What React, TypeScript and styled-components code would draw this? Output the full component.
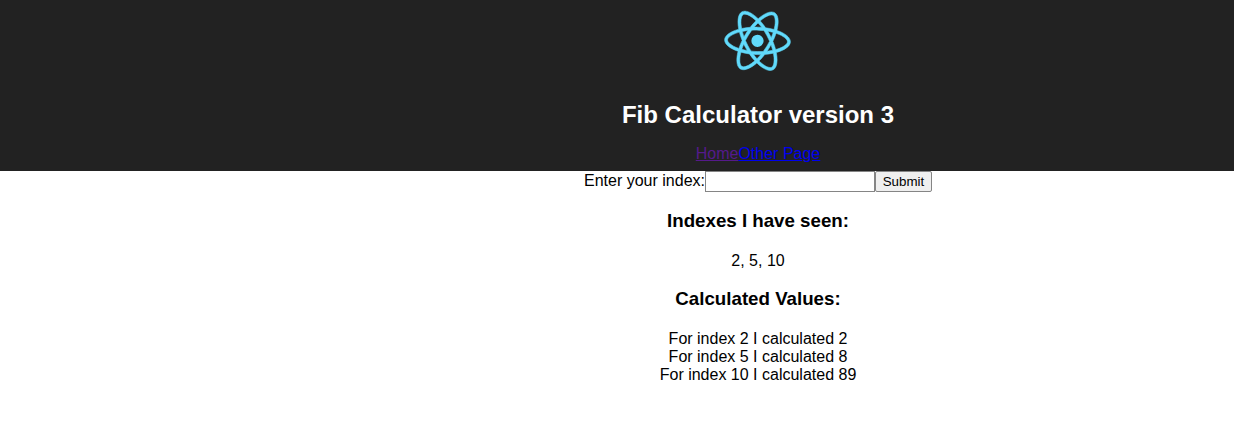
import React, { useState } from 'react';
import styled, { createGlobalStyle } from 'styled-components';

const GlobalStyle = createGlobalStyle`
  body {
    margin: 0;
    background: #fff;
    font-family: "Liberation Sans", Arial, sans-serif;
    font-size: 16px;
    color: #000;
  }
`;

const Page = styled.div`
  text-align: center;
  line-height: 18.4px;
`;

const Header = styled.header`
  box-sizing: border-box;
  height: 171px;
  padding: 1px 0 0 282px;
  background: #222;
  color: #fff;
  display: flex;
  flex-direction: column;
  align-items: center;
`;

const Content = styled.main`
  padding-left: 282px;
`;

const Logo = styled.svg`
  display: block;
  height: 80px;
  width: 113px;
  margin-right: 2px;
  flex: none;
  transform: rotate(1.8deg);
`;

const Title = styled.h1`
  margin: 20px 0 16px;
  font-size: 24px;
  line-height: 28px;
`;

const Nav = styled.nav`
  display: flex;
`;

const NavLink = styled.a<{ $visited?: boolean }>`
  color: ${({ $visited }) => ($visited ? '#551a8b' : '#0000ee')};
  text-decoration: underline;
`;

const Form = styled.form`
  display: flex;
  justify-content: center;
  height: 21px;
`;

const IndexLabel = styled.label`
  padding-top: 1px;
`;

const IndexInput = styled.input`
  box-sizing: border-box;
  width: 170px;
  height: 21px;
  margin: 0;
  padding: 1px 2px;
  border: 1px solid #858585;
  border-radius: 0;
  background: #fff;
  font: 13.333px "Liberation Sans", Arial, sans-serif;
`;

const SubmitButton = styled.button`
  box-sizing: border-box;
  width: 57px;
  height: 21px;
  margin: 0;
  padding: 0;
  border: 1px solid #858585;
  border-radius: 2px;
  background: #efefef;
  color: #000;
  font: 13.333px "Liberation Sans", Arial, sans-serif;
`;

const SectionTitle = styled.h3`
  margin: 18px 0 20.6px;
  font-size: 18.72px;
  line-height: 21px;
`;

const ValueRow = styled.div``;

const seen = [2, 5, 10];
const values = [
  { index: 2, value: 2 },
  { index: 5, value: 8 },
  { index: 10, value: 89 },
];

const ReactLogo = () => (
  <Logo viewBox="0 0 841.9 595.3" fill="#61dafb" aria-label="logo">
    <path stroke="#61dafb" strokeWidth="4" d="M666.3 296.5c0-32.5-40.7-63.3-103.1-82.4 14.4-63.6 8-114.2-20.2-130.4-6.5-3.8-14.1-5.6-22.4-5.6v22.3c4.6 0 8.3.9 11.4 2.6 13.6 7.8 19.5 37.5 14.9 75.7-1.1 9.4-2.9 19.3-5.1 29.4-19.6-4.8-41-8.5-63.5-10.9-13.5-18.5-27.5-35.3-41.6-50 32.6-30.3 63.2-46.9 84-46.9V78c-27.5 0-63.5 19.6-99.9 53.6-36.4-33.8-72.4-53.2-99.9-53.2v22.3c20.7 0 51.4 16.5 84 46.6-14 14.7-28 31.4-41.3 49.9-22.6 2.4-44 6.1-63.6 11-2.3-10-4-19.7-5.2-29-4.7-38.2 1.1-67.9 14.6-75.8 3-1.8 6.9-2.6 11.5-2.6V78.5c-8.4 0-16 1.8-22.6 5.6-28.1 16.2-34.4 66.7-19.9 130.1-62.2 19.2-102.7 49.9-102.7 82.3 0 32.5 40.7 63.3 103.1 82.4-14.4 63.6-8 114.2 20.2 130.4 6.5 3.8 14.1 5.6 22.5 5.6 27.5 0 63.5-19.6 99.9-53.6 36.4 33.8 72.4 53.2 99.9 53.2 8.4 0 16-1.8 22.6-5.6 28.1-16.2 34.4-66.7 19.9-130.1 62-19.1 102.5-49.9 102.5-82.3zm-130.2-66.7c-3.7 12.9-8.3 26.2-13.5 39.5-4.1-8-8.4-16-13.1-24-4.6-8-9.5-15.8-14.4-23.4 14.2 2.1 27.9 4.7 41 7.9zm-45.8 106.5c-7.8 13.5-15.8 26.3-24.1 38.2-14.9 1.3-30 2-45.2 2-15.1 0-30.2-.7-45-1.9-8.3-11.9-16.4-24.6-24.2-38-7.6-13.1-14.5-26.4-20.8-39.8 6.2-13.4 13.2-26.8 20.7-39.9 7.8-13.5 15.8-26.3 24.1-38.2 14.9-1.3 30-2 45.2-2 15.1 0 30.2.7 45 1.9 8.3 11.9 16.4 24.6 24.2 38 7.6 13.1 14.5 26.4 20.8 39.8-6.3 13.4-13.2 26.8-20.7 39.9zm32.3-13c5.4 13.4 10 26.8 13.8 39.8-13.1 3.2-26.9 5.9-41.2 8 4.9-7.7 9.8-15.6 14.4-23.7 4.6-8 8.9-16.1 13-24.1zM421.2 430c-9.3-9.6-18.6-20.3-27.8-32 9 .4 18.2.7 27.5.7 9.4 0 18.7-.2 27.8-.7-9 11.7-18.3 22.4-27.5 32zm-74.4-58.9c-14.2-2.1-27.9-4.7-41-7.9 3.7-12.9 8.3-26.2 13.5-39.5 4.1 8 8.4 16 13.1 24 4.7 8 9.5 15.8 14.4 23.4zM420.7 163c9.3 9.6 18.6 20.3 27.8 32-9-.4-18.2-.7-27.5-.7-9.4 0-18.7.2-27.8.7 9-11.7 18.3-22.4 27.5-32zm-74 58.9c-4.9 7.7-9.8 15.6-14.4 23.7-4.6 8-8.9 16-13 24-5.4-13.4-10-26.8-13.8-39.8 13.1-3.1 26.9-5.8 41.2-7.9zm-90.5 125.2c-35.4-15.1-58.3-34.9-58.3-50.6 0-15.7 22.9-35.6 58.3-50.6 8.6-3.7 18-7 27.7-10.1 5.7 19.6 13.2 40 22.5 60.9-9.2 20.8-16.6 41.1-22.2 60.6-9.9-3.1-19.3-6.5-28-10.2zM310 490c-13.6-7.8-19.5-37.5-14.9-75.7 1.1-9.4 2.9-19.3 5.1-29.4 19.6 4.8 41 8.5 63.5 10.9 13.5 18.5 27.5 35.3 41.6 50-32.6 30.3-63.2 46.9-84 46.9-4.5-.1-8.3-1-11.3-2.7zm237.2-76.2c4.7 38.2-1.1 67.9-14.6 75.8-3 1.8-6.9 2.6-11.5 2.6-20.7 0-51.4-16.5-84-46.6 14-14.7 28-31.4 41.3-49.9 22.6-2.4 44-6.1 63.6-11 2.3 10.1 4.1 19.8 5.2 29.1zm38.5-66.7c-8.6 3.7-18 7-27.7 10.1-5.7-19.6-13.2-40-22.5-60.9 9.2-20.8 16.6-41.1 22.2-60.6 9.9 3.1 19.3 6.5 28.1 10.2 35.4 15.1 58.3 34.9 58.3 50.6-.1 15.7-23 35.6-58.4 50.6z" />
    <circle cx="420.9" cy="296.5" r="45.7" />
  </Logo>
);

export default function App() {
  const [index, setIndex] = useState('');
  return (
    <Page>
      <GlobalStyle />
      <Header>
        <ReactLogo />
        <Title>Fib Calculator version 3</Title>
        <Nav>
          <NavLink href="#" $visited>Home</NavLink>
          <NavLink href="#">Other Page</NavLink>
        </Nav>
      </Header>
      <Content>
        <Form onSubmit={(e) => e.preventDefault()}>
          <IndexLabel htmlFor="index">Enter your index:</IndexLabel>
          <IndexInput id="index" value={index} onChange={(e) => setIndex(e.target.value)} />
          <SubmitButton>Submit</SubmitButton>
        </Form>
        <SectionTitle>Indexes I have seen:</SectionTitle>
        {seen.join(', ')}
        <SectionTitle>Calculated Values:</SectionTitle>
        {values.map((v) => (
          <ValueRow key={v.index}>
            For index {v.index} I calculated {v.value}
          </ValueRow>
        ))}
      </Content>
    </Page>
  );
}
